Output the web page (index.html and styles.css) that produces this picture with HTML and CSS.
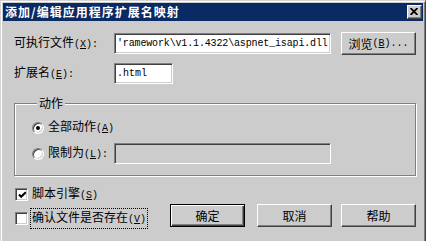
FILE: index.html
```html
<!DOCTYPE html>
<html lang="zh-CN">
<head>
<meta charset="utf-8">
<title>添加/编辑应用程序扩展名映射</title>
<link rel="stylesheet" href="styles.css">
</head>
<body>
<div class="window">
  <div class="titlebar">
    <span class="title">添加/编辑应用程序扩展名映射</span>
    <span class="close" aria-label="关闭">
      <svg width="8" height="7" viewBox="0 0 8 7"><path d="M0.5 0 L7.5 7 M7.5 0 L0.5 7" stroke="#000" stroke-width="1.8" fill="none"/></svg>
    </span>
  </div>
  <div class="content">
    <div class="row">
      <span class="lbl">可执行文件<span class="k">(<u>X</u>):</span></span>
      <div class="edit edit-exe"><span class="val">'ramework\v1.1.4322\aspnet_isapi.dll</span></div>
      <span class="btn btn-browse">浏览<span class="k">(<u>B</u>)...</span></span>
    </div>
    <div class="row">
      <span class="lbl">扩展名<span class="k">(<u>E</u>):</span></span>
      <div class="edit edit-ext"><span class="val">.html</span></div>
    </div>
    <fieldset class="group">
      <legend class="legend">动作</legend>
      <div class="opt">
        <span class="radio on"></span>
        <span class="opt-text">全部动作<span class="k">(<u>A</u>)</span></span>
      </div>
      <div class="opt">
        <span class="radio"></span>
        <span class="opt-text opt-limit">限制为<span class="k">(<u>L</u>):</span></span>
        <div class="edit edit-limit disabled"></div>
      </div>
    </fieldset>
    <div class="bottom">
      <div class="checks">
        <div class="chk-row">
          <span class="check"><svg width="9" height="9" viewBox="0 0 9 9"><path d="M1 3.5 L3.2 5.8 L7.8 1.2" stroke="#000" stroke-width="2" fill="none"/></svg></span>
          <span class="chk-text">脚本引擎<span class="k">(<u>S</u>)</span></span>
        </div>
        <div class="chk-row">
          <span class="check"></span>
          <span class="chk-text focus">确认文件是否存在<span class="k">(<u>V</u>)</span></span>
        </div>
      </div>
      <div class="buttons">
        <span class="btn btn-default">确定</span>
        <span class="btn btn-cancel">取消</span>
        <span class="btn btn-help">帮助</span>
      </div>
    </div>
  </div>
</div>
</body>
</html>
```
FILE: styles.css
```css
html, body {
  margin: 0;
  padding: 0;
  width: 426px;
  height: 241px;
  overflow: hidden;
  background: #cccccc;
}
body {
  font-family: "Noto Sans CJK SC", "Noto Sans", sans-serif;
  font-size: 12px;
  line-height: 14px;
  color: #000;
}
.window {
  box-sizing: border-box;
  width: 426px;
  height: 246px;
  border: 1px solid;
  border-color: #d4d4d4 #404040 #404040 #d4d4d4;
  box-shadow: inset 1px 1px 0 #fff, inset -1px -1px 0 #808080;
  padding: 2px;
  background: #cccccc;
}
.titlebar {
  height: 18px;
  background: #0a2a64;
  display: flex;
  align-items: center;
  justify-content: space-between;
  padding-left: 2px;
}
.title {
  color: #fff;
  font-weight: bold;
  letter-spacing: 1px;
  line-height: 18px;
}
.close {
  box-sizing: border-box;
  width: 15px;
  height: 14px;
  margin-right: 1px;
  background: #cccccc;
  border: 1px solid;
  border-color: #fff #404040 #404040 #fff;
  box-shadow: inset -1px -1px 0 #808080;
  display: flex;
  align-items: center;
  justify-content: center;
}
.close svg { display: block; margin-left: -1px; margin-top: -1px; }
.content {
  padding: 11px 7px 0 11px;
}
.k {
  font-family: "Liberation Mono", monospace;
  font-size: 10px;
}
.row {
  display: flex;
  align-items: center;
  height: 23px;
}
.row + .row { margin-top: 7px; }
.lbl {
  width: 100px;
  flex: none;
}
.edit {
  box-sizing: border-box;
  height: 21px;
  background: #fff;
  border: 1px solid;
  border-color: #808080 #fff #fff #808080;
  box-shadow: inset 1px 1px 0 #404040, inset -1px -1px 0 #cccccc;
  display: flex;
  align-items: center;
  overflow: hidden;
  white-space: nowrap;
  font-family: "Liberation Mono", monospace;
  font-size: 10px;
  padding: 0 1px 0 2px;
}
.edit-exe { width: 217px; letter-spacing: -0.15px; }
.edit-ext { width: 59px; }
.edit-limit { width: 217px; }
.edit.disabled { background: #cccccc; }
.val { flex: none; }
.btn {
  box-sizing: border-box;
  width: 75px;
  height: 23px;
  border: 1px solid;
  border-color: #fff #404040 #404040 #fff;
  box-shadow: inset -1px -1px 0 #808080;
  background: #cccccc;
  display: flex;
  align-items: center;
  justify-content: center;
  flex: none;
}
.btn-browse { margin-left: 10px; }
.btn-default {
  border-color: #000;
  box-shadow: inset 1px 1px 0 #fff, inset -1px -1px 0 #404040, inset -2px -2px 0 #808080;
}
.btn-cancel { margin-left: 12px; }
.btn-help { margin-left: 9px; }
.group {
  margin: 11px 0 0 0;
  padding: 7px 0 11px 17px;
  border: 1px solid #808080;
  box-shadow: 1px 1px 0 #fff, inset 1px 1px 0 #fff;
  min-width: 0;
}
.legend {
  margin-left: 5px;
  padding: 0 2px;
  background: #cccccc;
  line-height: 14px;
}
.opt {
  display: flex;
  align-items: center;
  height: 21px;
}
.opt + .opt { margin-top: 5px; }
.radio {
  box-sizing: border-box;
  width: 12px;
  height: 12px;
  border-radius: 50%;
  background: #fff;
  border: 1px solid;
  border-color: #808080 #fff #fff #808080;
  box-shadow: inset 1px 1px 0 #404040, inset -1px -1px 0 #cccccc;
  display: flex;
  align-items: center;
  justify-content: center;
  flex: none;
  margin-right: 4px;
}
.radio.on::after {
  content: "";
  width: 4px;
  height: 4px;
  border-radius: 50%;
  background: #000;
}
.opt-limit {
  width: 66px;
  flex: none;
}
.bottom {
  display: flex;
  align-items: flex-start;
  margin-top: 9px;
}
.checks {
  flex: 0 0 156px;
  display: flex;
  flex-direction: column;
  gap: 5px;
}
.chk-row {
  display: flex;
  align-items: center;
  height: 19px;
}
.check {
  box-sizing: border-box;
  width: 13px;
  height: 13px;
  margin-left: 1px;
  margin-right: 2px;
  background: #fff;
  border: 1px solid;
  border-color: #808080 #fff #fff #808080;
  box-shadow: inset 1px 1px 0 #404040, inset -1px -1px 0 #cccccc;
  display: flex;
  align-items: center;
  justify-content: center;
  flex: none;
}
.check svg { display: block; margin: 1px 0 0 1px; }
.chk-text {
  border: 1px dotted transparent;
  padding: 1px 1px;
}
.chk-text.focus { border-color: #000; }
.buttons {
  display: flex;
  margin-top: 19px;
}
```
